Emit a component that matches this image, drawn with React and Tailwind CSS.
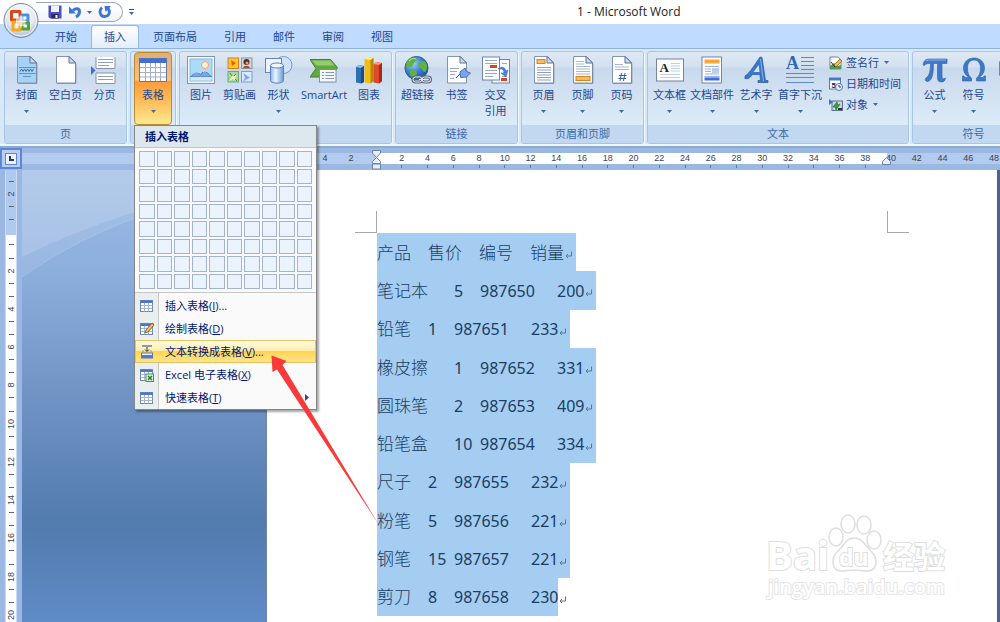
import { clsx } from "clsx";

const TABS = ["开始", "插入", "页面布局", "引用", "邮件", "审阅", "视图"];

const DOC_ROWS = [
  ["产品", "售价", "编号", "销量"],
  ["笔记本", "5", "987650", "200"],
  ["铅笔", "1", "987651", "233"],
  ["橡皮擦", "1", "987652", "331"],
  ["圆珠笔", "2", "987653", "409"],
  ["铅笔盒", "10", "987654", "334"],
  ["尺子", "2", "987655", "232"],
  ["粉笔", "5", "987656", "221"],
  ["钢笔", "15", "987657", "221"],
  ["剪刀", "8", "987658", "230"],
];

function Caret({ className }) {
  return (
    <svg viewBox="0 0 5 3" className={clsx("h-[3px] w-[5px] shrink-0", className)}>
      <path d="M0 0h5L2.5 3z" fill="#3f69a8" />
    </svg>
  );
}

function Icon({ children }) {
  return (
    <svg viewBox="0 0 28 28" className="h-7 w-7 shrink-0" fill="none">
      {children}
    </svg>
  );
}

/* Sheet of paper with a folded corner, shared by several icons */
function Sheet({ fill = "#fdfeff" }) {
  return (
    <>
      <path d="M4.500 .5h13l6 6v20.500h-19z" fill={fill} stroke="#8593ab" />
      <path d="M17 .5v6.500h6.500z" fill="#cfdcee" stroke="#5f7090" />
      <path d="M5 27.500h19v-20" stroke="#5f7090" strokeOpacity=".5" />
    </>
  );
}

const CoverIcon = () => (
  <Icon>
    <Sheet fill="#a4d3f7" />
    <path d="M6 11.500h16.500M6 17.500h16.500" stroke="#5f93bd" />
    <path d="M7 15.500l1.500-2.500 1.500 2.500 1.500-2.500 1.500 2.500 1.500-2.500 1.500 2.500 1.500-2.500 1.500 2.500 1.500-2.500" stroke="#3f6f9c" />
    <path d="M10 20.500h8" stroke="#5f93bd" />
  </Icon>
);

const BlankIcon = () => (
  <Icon>
    <Sheet />
  </Icon>
);

const BreakIcon = () => (
  <Icon>
    <path d="M5 1h19v11h-19zM5 17h19v10h-19z" fill="#fff" />
    <path d="M5 1v11.500h19v-11.500M5 27.500v-10.500h19v10.500z" stroke="#8593ab" />
    <path d="M7 3.500h15M7 6.500h15M7 9.500h11M7 20.500h15M7 23.500h15" stroke="#8ea0bd" />
    <path d="M0 10l4.500 4.500-4.500 4.500z" fill="#3f6fcf" />
  </Icon>
);

const TableIcon = () => (
  <Icon>
    <rect x=".5" y="2.500" width="27" height="23" fill="#fff" stroke="#65779a" />
    <rect x=".5" y="2.500" width="27" height="4.500" fill="#3f6fd8" />
    <path d="M1 11.500h26M1 16.500h26M1 21h26M6.500 7v18M11.500 7v18M16.500 7v18M21.500 7v18" stroke="#a3afc4" />
  </Icon>
);

const PictureIcon = () => (
  <Icon>
    <rect x=".5" y=".5" width="27" height="27" fill="#f7f9fc" stroke="#8794aa" />
    <rect x="3" y="3" width="22" height="22" fill="#a9dcf8" stroke="#8ab4da" />
    <circle cx="18" cy="9" r="3.500" fill="#fff0d5" stroke="#f3a15e" />
    <path d="M3.500 21l6-6 4 4 4-5 7 7z" fill="#7fa6df" stroke="#4776bd" />
    <path d="M3.500 21h21v3.500h-21z" fill="#cdeafb" />
    <path d="M7 17.500l2.500-2.500 2 2M16 16l1.500-2 2 2" stroke="#fff" />
  </Icon>
);

const ClipIcon = () => (
  <Icon>
    <rect x="2" y="2" width="10.500" height="10.500" fill="#ffc928" stroke="#d97c20" />
    <path d="M5 4l5 3-4 3z" fill="#e85d15" />
    <rect x="15.500" y="2" width="10.500" height="10.500" fill="#d9d3d0" stroke="#8993a3" />
    <circle cx="20.500" cy="6" r="3" fill="#4a332d" />
    <circle cx="21" cy="7" r="1.500" fill="#e0a67c" />
    <path d="M17 12c1-3 6-3 7 0z" fill="#b5472d" />
    <rect x="2" y="15.500" width="10.500" height="10.500" fill="#a9d9a3" stroke="#6aa87a" />
    <path d="M4 17l3 4 4-3-2 4 2 3-4-2-4 2 3-4z" fill="#fff6b0" />
    <path d="M4 17l2 3M11 25l-2-2M10 18l-2 2" stroke="#348b52" />
    <rect x="15.500" y="15.500" width="10.500" height="10.500" fill="#d9e8fb" stroke="#7f9ccb" />
    <path d="M17 17l7 4.500-7 4 2-4z" fill="#86a5ea" />
  </Icon>
);

const ShapesIcon = () => (
  <Icon>
    <circle cx="18.500" cy="9" r="8.500" fill="#cfe2f6" stroke="#7c98c1" />
    <rect x=".5" y="2.500" width="16" height="14" fill="#eaf3fc" stroke="#6c83a8" />
    <path d="M5.500 9.500v15c0 3.500 13 3.500 13 0v-15z" fill="url(#cyl)" stroke="#5d82bd" />
    <ellipse cx="12" cy="9.500" rx="6.500" ry="2.500" fill="#eef6ff" stroke="#5d82bd" />
    <defs>
      <linearGradient id="cyl">
        <stop stopColor="#8cb6ec" />
        <stop offset=".4" stopColor="#edf6ff" />
        <stop offset="1" stopColor="#6795d6" />
      </linearGradient>
    </defs>
  </Icon>
);

const SmartArtIcon = () => (
  <Icon>
    <path d="M0 3.500h20.500l7 8-6 9.500h-21.500l6-8.500z" fill="#63a83f" stroke="#417f2d" />
    <path d="M2 4.500h18l4.500 5h-18z" fill="#93cc70" />
    <rect x="9.500" y="13.500" width="16.500" height="12.500" fill="#f5f8fb" stroke="#7d8ea8" />
    <path d="M12 16.500h2M12 19.500h2M12 22.500h2M15.500 16.500h8.500M15.500 19.500h8.500M15.500 22.500h8.500" stroke="#8797b0" />
  </Icon>
);

const ChartIcon = () => (
  <Icon>
    <path d="M1 11l3-2 5 1v16l-3 1.500-5-1z" fill="#2c6fb5" />
    <path d="M1 11l3-2 5 1-3 2z" fill="#8bc0ec" />
    <path d="M6 12l3-2v16l-3 1.500z" fill="#1c4d86" />
    <path d="M9.500 3l3-2 6 1v23l-3 2.500-6-1z" fill="#f0bd17" />
    <path d="M9.500 3l3-2 6 1-3 2z" fill="#fff087" />
    <path d="M15.500 4l3-2v23l-3 2.500z" fill="#b9830c" />
    <path d="M18.500 8l3-2 5.500 1v18l-3 2.500-5.500-1z" fill="#e04a28" />
    <path d="M18.500 8l3-2 5.500 1-3 2z" fill="#ff9d80" />
    <path d="M24 9l3-2v18l-3 2.500z" fill="#a42c14" />
  </Icon>
);

const LinkIcon = () => (
  <Icon>
    <circle cx="12.500" cy="12" r="11.500" fill="url(#globe)" stroke="#27569c" />
    <path d="M3 5c3-4 8-4 10-3 1 2-2 3-3 5s-1 4-4 4-5 2-4-2zM15 7c3-3 6-2 7 0 2 3 1 8-1 9-3 0-2-4-5-4-2-1-3-3-1-5zM7 14c3-1 6 1 6 3s-3 4-3 5c-4-1-6-5-3-8z" fill="#63b043" />
    <path d="M5 5c3-3 6-3 7-2" stroke="#bce698" />
    <g stroke="#5e6c7d" strokeWidth="3">
      <rect x="9" y="21" width="9" height="5" rx="2.500" />
      <rect x="18" y="21" width="8.500" height="5" rx="2.500" />
    </g>
    <g stroke="#e3e9ef">
      <rect x="9" y="21" width="9" height="5" rx="2.500" />
      <rect x="18" y="21" width="8.500" height="5" rx="2.500" />
      <path d="M15 23.500h6" />
    </g>
    <defs>
      <radialGradient id="globe" cx=".35" cy=".3" r=".8">
        <stop stopColor="#9fd3fa" />
        <stop offset=".5" stopColor="#3a80d9" />
        <stop offset="1" stopColor="#1d4897" />
      </radialGradient>
    </defs>
  </Icon>
);

const BookmarkIcon = () => (
  <Icon>
    <path d="M4.500 .5h13l6 6v20.500h-19z" fill="#fdfeff" stroke="#8593ab" />
    <path d="M17 .5v6.500h6.500z" fill="#cfdcee" stroke="#5f7090" />
    <path d="M7 12.500h9M7 15.500h7M7 18.500h5M7 22.500h4" stroke="#9aa9c2" />
    <path d="M13 22l5-5" stroke="#2e4f93" />
    <path d="M17 16l5-4 1.500 3.500 4 1.500-4 4-6 .5z" fill="#7ba5e9" stroke="#4571c2" />
  </Icon>
);

const CrossRefIcon = () => (
  <Icon>
    <rect x="10" y="3.500" width="17.500" height="23.500" fill="#f8fafd" stroke="#75849e" />
    <rect x="0.500" y="1" width="17" height="23" fill="#fdfeff" stroke="#75849e" />
    <path d="M3 4.500h12M3 7.500h12M3 14.500h12M3 17.500h12M3 20.500h8M20 7.500h5M20 20.500h5" stroke="#9aa9c2" />
    <path d="M8 9h7v3h-7zM19 22h6v3h-6z" fill="#e2431e" />
    <path d="M16 13c4-1 6 1 6 4h-3l5 4 2-7-2 1c-1-4-4-5-8-2z" fill="#4f80da" stroke="#335da9" strokeWidth=".5" />
  </Icon>
);

const HeaderIcon = () => (
  <Icon>
    <Sheet />
    <rect x="7" y="3.500" width="8" height="4" fill="#f9bc62" stroke="#d9821e" />
    <path d="M7 11.500h14M7 14h14M7 16.500h14M7 19h14M7 21.500h14M7 24h14" stroke="#8fa1c2" />
  </Icon>
);

const FooterIcon = () => (
  <Icon>
    <Sheet />
    <path d="M7 5.500h8M7 8h8M7 10.500h14M7 13h14M7 15.500h14M7 18h14" stroke="#a9b8d2" />
    <rect x="7" y="20.500" width="14" height="4" fill="#f9bc62" stroke="#d9821e" />
  </Icon>
);

const PageNoIcon = () => (
  <Icon>
    <Sheet />
    <path d="M7 8.500h8M7 11h14M7 13.500h14" stroke="#a9b8d2" />
    <path d="M13.500 17l-1.500 8M17 17l-1.500 8M11 19.500h7.500M10.500 22.500h7.500" stroke="#3c5f9e" />
  </Icon>
);

const TextBoxIcon = () => (
  <Icon>
    <rect x="0.500" y="3" width="27" height="22" fill="#fafcff" stroke="#76849c" />
    <text x="3.500" y="16" fontSize="13" fontWeight="bold" fill="#222" fontFamily="Liberation Serif">A</text>
    <path d="M15 7.500h9M15 10h9M15 12.500h9M15 15h9M4 18.500h20M4 21.500h20" stroke="#c3cddd" />
  </Icon>
);

const PartsIcon = () => (
  <Icon>
    <rect x="4" y="1" width="19.500" height="26" fill="#fdfeff" stroke="#76849c" />
    <path d="M6.500 3.500h15v4h-15z" fill="#f9a63a" />
    <path d="M7 10.500h14M7 13h6M15 13h6M7 15.500h6M7 18h14" stroke="#9db0d4" />
    <path d="M14 12h7v5h-7z" fill="#b9cbee" />
    <path d="M6.500 20h15v2h-15z" fill="#8eb0ea" />
    <path d="M6.500 22h15v2.500h-15z" fill="#3f6fcb" />
  </Icon>
);

const WordArtIcon = () => (
  <Icon>
    <path d="M3 20c5-3 10-12 15-19l2 .5 3.500 23h2.500v2h-10v-2h2.500l-.6-6h-7.500c-2 3-4 5-7.500 4z" fill="#3c76c6" stroke="#275a9f" strokeWidth=".7" />
    <path d="M11.500 16h6l-.8-7z" fill="#d3e2f4" />
    <path d="M18.500 3l3 22" stroke="#84b2ec" />
  </Icon>
);

const DropCapIcon = () => (
  <Icon>
    <text x="0" y="13" fontSize="18" fontWeight="bold" fill="#2f67b2" fontFamily="Liberation Serif">A</text>
    <path d="M15 1.500h13M15 5.500h13M15 9.500h13M15 13.500h13M0 17.500h28M0 21.500h28M0 26.500h28" stroke="#5d88cb" />
  </Icon>
);

const PiIcon = () => (
  <Icon>
    <path d="M2 9c1-5 3-6 7-6h17v4.500h-5v13c0 3 2 2.500 3.500 1.500-.5 3-2 4-4 4-3 0-4-1.500-4-4.500v-14h-4c0 9-1 17.500-6 18-2.500 0-3-2.500-1-4 3-2 4-7 4-14-3 0-4.500 0-6 2z" fill="#3e79c7" stroke="#2b5fa8" strokeWidth=".6" />
    <path d="M5 5c1-1 3-1 5-1h15" stroke="#8db8ee" />
  </Icon>
);

const OmegaIcon = () => (
  <Icon>
    <path d="M2.500 25v-5h1.500l.8 1.500h4c-4-3-5.300-6-5.300-9.500 0-6 4.500-10 10.500-10s10.500 4 10.500 10c0 3.500-1.300 6.500-5.300 9.500h4l.8-1.500h1.500v5h-9v-3c3-2 4-5.500 4-10 0-5-2.500-8-6.500-8s-6.500 3-6.500 8c0 4.500 1 8 4 10v3z" fill="#3e79c7" stroke="#2b5fa8" strokeWidth=".6" />
  </Icon>
);

const NumberIcon = () => (
  <Icon>
    <rect x="0.500" y="5" width="27" height="15" rx="1" fill="#fafcff" stroke="#76849c" />
  </Icon>
);

function RibbonButton({ label, name, icon: Glyph, caret, className, active }) {
  return (
    <button
      type="button"
      aria-label={name}
      className={clsx(
        "flex shrink-0 flex-col items-center rounded-sm pt-[3px] text-[11px] leading-4",
        className || "w-[39px]",
        active
          ? "border border-[#c28a30] bg-[linear-gradient(#dcae78,#fbc278_38%,#fb9c3c_40%,#fdb956_65%,#ffe98f)] text-[#2a4a86]"
          : "border border-transparent"
      )}
    >
      <Glyph />
      <span className="mt-[3px] whitespace-pre">{label}</span>
      {caret && <Caret className="mt-[7px]" />}
    </button>
  );
}

function Group({ title, children, className }) {
  return (
    <section
      className={clsx(
        "flex h-[93px] shrink-0 flex-col rounded-[3px] border border-[#a9c5e6] shadow-[1px_1px_0_#eef6fe]",
        "bg-[linear-gradient(#dfe9f5,#d2e0f0_16%,#c9d9ed_18%,#dcebf8_80%)]",
        className
      )}
    >
      <div className="flex flex-1 px-[2px]">{children}</div>
      <h2 className="h-[18px] rounded-b-[2px] bg-[#c1d8f0] text-center text-[11px] leading-[17px] text-[#3e6aaa]">
        {title}
      </h2>
    </section>
  );
}

function SmallButton({ label, caret, children }) {
  return (
    <button type="button" className="flex h-[21px] items-center gap-[3px] whitespace-nowrap text-[11px] leading-4">
      <svg viewBox="0 0 14 14" className="h-[14px] w-[14px]" fill="none">
        {children}
      </svg>
      {label}
      {caret && <Caret className="ml-[2px]" />}
    </button>
  );
}

function Orb() {
  return (
    <button type="button" aria-label="Office" className="absolute top-[2px] left-[2px] z-10">
      <svg viewBox="0 0 38 38" className="h-[38px] w-[38px]" fill="none">
        <defs>
          <radialGradient id="orb" cx=".5" cy=".35" r=".65">
            <stop stopColor="#fff" />
            <stop offset=".6" stopColor="#e6ebf2" />
            <stop offset="1" stopColor="#a9b8cc" />
          </radialGradient>
        </defs>
        <circle cx="19" cy="18.500" r="17" fill="url(#orb)" stroke="#7d8da5" />
        <circle cx="19" cy="18.500" r="15.500" stroke="#fff" strokeOpacity=".8" />
        <g strokeWidth="3" strokeLinejoin="round">
          <rect x="9.500" y="9.500" width="8.500" height="8.500" stroke="#d9471a" />
          <rect x="20" y="13" width="6" height="6" stroke="#4a90dc" />
          <rect x="20" y="21" width="6.500" height="6" stroke="#55a233" />
          <rect x="11" y="20" width="7" height="8" stroke="#f5a91a" />
        </g>
        <path d="M14 14.500h9.500v9.500h-9.500z" fill="#f5f6f8" fillOpacity=".6" />
        <path d="M19 13.500v12M14 19.500h10.500" stroke="#fff" />
      </svg>
    </button>
  );
}

function TitleBar() {
  return (
    <header className="flex h-6 items-center bg-white">
      <div className="ml-[36px] flex h-5 w-[87px] items-center rounded-r-full border border-l-0 border-[#9aa7b8] bg-gradient-to-b from-white to-[#f1f4f9] pl-[12px]">
        <button type="button" aria-label="保存">
          <svg viewBox="0 0 14 14" className="h-[14px] w-[14px]">
            <path d="M.5.5h13v13h-11.500l-1.500-1.500z" fill="#4b4fc2" />
            <path d="M3 .5h8v6.500h-8z" fill="#f0f3fb" />
            <path d="M3.500 9h7v4.500h-7z" fill="#2a2c55" />
            <path d="M7.500 10h2v3h-2z" fill="#fff" />
          </svg>
        </button>
        <button type="button" aria-label="撤消" className="ml-[6px] flex items-center gap-[5px]">
          <svg viewBox="0 0 14 14" className="h-[14px] w-[14px]" fill="none">
            <path d="M5 5.500c3-3 6.500-2 6.500 1 0 2.500-1 4-3.500 5.500" stroke="#3d76d0" strokeWidth="3" />
            <path d="M1 1.500v7h7z" fill="#3d76d0" />
          </svg>
          <Caret />
        </button>
        <button type="button" aria-label="重复" className="ml-[6px]">
          <svg viewBox="0 0 14 14" className="h-[14px] w-[14px]" fill="none">
            <path d="M4 2.500c-3.500 3.500-2 9 2.500 9 5 0 6-5 3.500-8" stroke="#3d76d0" strokeWidth="2.800" />
            <path d="M6.500 1h6.500l-5.500 6z" fill="#3d76d0" />
          </svg>
        </button>
      </div>
      <button type="button" aria-label="自定义快速访问工具栏" className="ml-[6px] flex flex-col items-center gap-[2px]">
        <span className="h-px w-[5px] bg-[#2c4a7c]" />
        <Caret />
      </button>
      <h1 className="ml-[443px] text-[12px] leading-5 text-[#222]">1 - Microsoft Word</h1>
    </header>
  );
}

function Tabs() {
  return (
    <nav className="flex h-6 items-end gap-px bg-[#bfdbff] pl-[42px]">
      {TABS.map((tab) => (
        <button
          key={tab}
          type="button"
          className={clsx(
            "h-[23px] rounded-t-[3px] border border-b-0 px-[12px] text-[11px] leading-5 whitespace-nowrap",
            tab === "插入" ? "border-[#94b8e2] bg-gradient-to-b from-white to-[#e2edf9]" : "border-transparent"
          )}
        >
          {tab}
        </button>
      ))}
    </nav>
  );
}

function Ribbon() {
  return (
    <div className="flex h-[100px] gap-[3px] overflow-hidden border-t border-b-2 border-t-[#8db2e3] border-b-[#8aaad2] bg-[#d7e8f9] pt-[2px] pl-1 shadow-[inset_0_-2px_0_#e7fbff]">
      <Group title="页">
        <RibbonButton label="封面" icon={CoverIcon} caret />
        <RibbonButton label="空白页" icon={BlankIcon} />
        <RibbonButton label="分页" icon={BreakIcon} />
      </Group>
      <Group className="w-[46px]">
        <div className="flex px-px">
          <RibbonButton label="表格" icon={TableIcon} caret active className="w-[38px]" />
        </div>
      </Group>
      <Group className="w-[213px]">
        <RibbonButton label="图片" icon={PictureIcon} className="w-[38px]" />
        <RibbonButton label="剪贴画" icon={ClipIcon} className="w-[39px]" />
        <RibbonButton label="形状" icon={ShapesIcon} caret className="w-[39px]" />
        <RibbonButton label="SmartArt" icon={SmartArtIcon} className="w-[52px]" />
        <RibbonButton label="图表" icon={ChartIcon} className="w-[38px]" />
      </Group>
      <Group title="链接">
        <RibbonButton label="超链接" icon={LinkIcon} />
        <RibbonButton label="书签" icon={BookmarkIcon} />
        <RibbonButton label={"交叉\n引用"} icon={CrossRefIcon} />
      </Group>
      <Group title="页眉和页脚">
        <RibbonButton label="页眉" icon={HeaderIcon} caret />
        <RibbonButton label="页脚" icon={FooterIcon} caret />
        <RibbonButton label="页码" icon={PageNoIcon} caret />
      </Group>
      <Group title="文本" className="w-[262px]">
        <RibbonButton label="文本框" icon={TextBoxIcon} caret className="w-[39px]" />
        <RibbonButton label="文档部件" icon={PartsIcon} caret className="w-[46px]" />
        <RibbonButton label="艺术字" icon={WordArtIcon} caret className="w-[42px]" />
        <RibbonButton label="首字下沉" icon={DropCapIcon} caret className="w-[46px]" />
        <div className="ml-[6px] flex flex-col">
          <SmallButton label="签名行" caret>
            <path d="M1 1h8l3 3v9h-11z" fill="#fff" stroke="#76849c" />
            <path d="M1 10l4-3 3 3 4-1v4h-11z" fill="#4f9a4c" />
            <path d="M5 9l6-6 2 2-6 6z" fill="#f2bb3f" stroke="#7b5a20" strokeWidth=".7" />
            <path d="M2 6l4 5" stroke="#333" />
          </SmallButton>
          <SmallButton label="日期和时间">
            <rect x=".5" y="1" width="11" height="11" fill="#fff" stroke="#5b78b0" />
            <path d="M.5 1h11v2.500h-11z" fill="#4678d2" />
            <text x="2.500" y="11" fontSize="8" fontWeight="bold" fill="#223" fontFamily="Liberation Sans">5</text>
            <circle cx="10" cy="10" r="3.500" fill="#e5f0fc" stroke="#5b78b0" />
            <path d="M10 8v2h2" stroke="#345" />
          </SmallButton>
          <SmallButton label="对象" caret>
            <rect x="3" y="3" width="10.500" height="9.500" fill="#c6d5e8" stroke="#5b6f90" />
            <path d="M0 1l4 3-4 3z" fill="#3f6fcf" />
            <path d="M4 9l4-5 1 3 2-1-4 6-1-3z" fill="#35a035" stroke="#1d6d24" strokeWidth=".6" />
            <path d="M9 10h4v2h-4z" fill="#333" />
          </SmallButton>
        </div>
      </Group>
      <Group title="符号">
        <RibbonButton label="公式" icon={PiIcon} caret />
        <RibbonButton label="符号" icon={OmegaIcon} caret />
        <RibbonButton name="编号" icon={NumberIcon} />
      </Group>
    </div>
  );
}

function HRuler() {
  const marks = Array.from({ length: 24 }, (_, i) => (i + 1) * 2);
  return (
    <div className="flex h-[22px] overflow-hidden bg-[#9ab8e1] font-['Liberation_Sans',sans-serif] text-[9px] leading-[11px] text-[#3c4350]">
      <div className="flex h-[21px] w-[22px] shrink-0 items-center justify-center border-2 border-[#5f86d6] bg-[#b9cff0]">
        <span className="flex h-3 w-3 items-center justify-center border border-[#5f86d6] bg-[#eaf2fd]">
          <span className="h-[5px] w-[5px] border-b-2 border-l-2 border-[#26395e]" />
        </span>
      </div>
      <div className="mt-[5px] flex h-[11px] w-[354px] shrink-0 justify-end bg-[#b3cbef] pr-[12px]">
        <span className="w-[26px] text-center">4</span>
        <span className="w-[26px] text-center">2</span>
      </div>
      <div className="relative -mr-[7px] flex-1">
        <div className="mt-[5px] flex h-[11px] bg-[linear-gradient(to_right,#fff_511px,#b3cbef_511px)] pl-[13px]">
          {marks.map((n) => (
            <span key={n} className="min-w-0 flex-1 text-center">
              {n}
            </span>
          ))}
        </div>
        <div className="flex pl-[13px]">
          {marks.map((n) => (
            <span key={n} className="flex flex-1 justify-center">
              {n < 40 && <span className="mt-px h-[3px] w-px bg-[#6c7889]" />}
            </span>
          ))}
        </div>
        <svg viewBox="0 0 9 20" className="absolute top-[2px] -left-[4px] h-5 w-[9px]" fill="#e8eef6" stroke="#6b84ad">
          <path d="M.5.5h8v2.500l-4 4.500-4-4.500zM4.500 7.500l4 4v2h-8v-2zM.5 14h8v5h-8z" />
        </svg>
        <svg viewBox="0 0 9 8" className="absolute top-[9px] left-[506px] h-2 w-[9px]" fill="#e8eef6" stroke="#6b84ad">
          <path d="M4.500.5l4 4v3h-8v-3z" />
        </svg>
      </div>
    </div>
  );
}

function VRuler() {
  const marks = [2, "", 2, 4, 6, 8, 10, 12, 14, 16, 18, 20];
  return (
    <div className="h-full w-[22px] shrink-0 overflow-hidden bg-[#9ab8e1] pl-[5px]">
      <div className="w-3 border-x border-[#c9dbf5] bg-[linear-gradient(#b0c9ee_65px,#fff_65px)] pt-[5px] font-['Liberation_Sans',sans-serif] text-[9px] leading-3 text-[#3c4350]">
        <div className="flex h-[459px] flex-col">
          {marks.map((n, i) => (
            <div key={i} className="flex flex-1 flex-col items-center justify-evenly">
              <span className="h-px w-[5px] bg-[#5c6676]" />
              <span className="flex h-3 w-3 -rotate-90 items-center justify-center">{n}</span>
              <span className="h-px w-[5px] bg-[#5c6676]" />
            </div>
          ))}
        </div>
      </div>
    </div>
  );
}

const MINI_TABLE = (
  <>
    <rect x=".5" y="1.500" width="12" height="11" fill="#fff" stroke="#6f86b5" />
    <path d="M.5 1.500h12v2.500h-12z" fill="#4a78cf" />
    <path d="M1 6.500h11.500M1 9.500h11.500M4.500 4v8.500M8.500 4v8.500" stroke="#a4b4d3" />
  </>
);

const MENU_ITEMS = [
  { text: "插入表格", hotkey: "I", dots: true, icon: MINI_TABLE },
  {
    text: "绘制表格",
    hotkey: "D",
    icon: (
      <>
        {MINI_TABLE}
        <path d="M5 11l1-3 6-7 2 2-6 7z" fill="#efbf58" stroke="#5d4526" strokeWidth=".7" />
        <path d="M12 1l2 2" stroke="#d8554a" strokeWidth="1.500" />
      </>
    ),
  },
  {
    text: "文本转换成表格",
    hotkey: "V",
    dots: true,
    active: true,
    icon: (
      <>
        <path d="M2 0h10v2h-10z" fill="#8e99aa" />
        <path d="M7 2v4M5 4.500l2 2 2-2" stroke="#333" />
        <path d="M2 6h2M10 6h2" stroke="#8e99aa" />
        <rect x="1.500" y="8" width="11" height="5" fill="#e7f0fc" stroke="#5674b2" />
        <path d="M1.500 10h11v3h-11z" fill="#4c7bd3" />
      </>
    ),
  },
  {
    text: "Excel 电子表格",
    hotkey: "X",
    icon: (
      <>
        {MINI_TABLE}
        <rect x="6" y="6" width="7.500" height="7.500" fill="#e7f5e5" stroke="#3c9448" />
        <path d="M8 8l4 4M12 8l-4 4" stroke="#267a33" strokeWidth="1.500" />
      </>
    ),
  },
  { text: "快速表格", hotkey: "T", sub: true, icon: MINI_TABLE },
];

function TableMenu() {
  return (
    <div
      role="menu"
      className="absolute top-[125px] left-[134px] z-20 w-[183px] border border-[#868686] bg-[#fafafa] shadow-[2px_2px_2px_rgba(0,0,0,0.35)]"
    >
      <h3 className="h-[22px] border-b border-[#c5c5c5] bg-[#dde7ee] pl-[10px] text-[11px] leading-[22px] font-bold text-[#00156e]">
        插入表格
      </h3>
      <div className="mx-1 mt-[3px] grid h-[138px] grid-cols-10 grid-rows-8 gap-[2px]">
        {Array.from({ length: 80 }, (_, i) => (
          <span key={i} className="border border-[#a3b4d2] bg-[#ebf3ff]" />
        ))}
      </div>
      <div className="mt-[3px] border-t border-[#c5c5c5] bg-[linear-gradient(to_right,#e9eeee_23px,#c5c5c5_23px,#c5c5c5_24px,#fafafa_24px)] pt-px">
        {MENU_ITEMS.map((item) => (
          <button
            key={item.hotkey}
            type="button"
            role="menuitem"
            className={clsx(
              "flex h-[23px] w-full items-center border pr-[6px] pl-[4px] text-[11px] leading-4 text-[#00156e]",
              item.active
                ? "border-[#e6c35c] bg-[linear-gradient(#fffbe6,#ffedad_45%,#ffd44f_50%,#ffe48e)]"
                : "border-transparent"
            )}
          >
            <svg viewBox="0 0 14 14" className="h-[14px] w-[14px] shrink-0" fill="none">
              {item.icon}
            </svg>
            <span className="ml-[11px] pt-px whitespace-nowrap">
              {item.text}(<u>{item.hotkey}</u>){item.dots && "..."}
            </span>
            {item.sub && (
              <svg viewBox="0 0 4 7" className="ml-auto h-[7px] w-1">
                <path d="M0 0l4 3.500-4 3.500z" fill="#2c4a8c" />
              </svg>
            )}
          </button>
        ))}
      </div>
    </div>
  );
}

function ReturnMark() {
  return (
    <svg viewBox="0 0 12 10" className="mt-[6px] h-[10px] w-[12px] shrink-0" fill="none" stroke="#56789c">
      <path d="M7.500 1.500v4.500h-5.500M4 4l-2 2 2 2" />
    </svg>
  );
}

function DocLine({ cells, last }) {
  return (
    <p className="flex items-center">
      <span className="flex h-full items-center bg-[#a4cdf1]">
        {cells.map((cell, i) => {
          const cjk = /[^\d]/.test(cell);
          return (
            <span
              key={i}
              className={clsx(
                "pt-px",
                cjk ? "text-[17px] font-light" : "text-[16px]",
                i < 3 && (cell.length > 2 ? "w-[77px]" : cjk ? "w-[51px]" : "w-[26px]")
              )}
            >
              {cell}
            </span>
          );
        })}
        {!last && <ReturnMark />}
      </span>
      {last && <ReturnMark />}
    </p>
  );
}

function Watermark() {
  return (
    <svg
      viewBox="0 0 184 100"
      className="absolute right-[50px] bottom-[10px] h-[100px] w-[184px]"
      fill="#fff"
      stroke="#dedede"
      strokeWidth="2"
      fontFamily="Open Sans, Noto Sans CJK SC, sans-serif"
      fontWeight="bold"
    >
      <g strokeWidth="1.500">
        <ellipse cx="73" cy="25" rx="7" ry="9" />
        <ellipse cx="85" cy="12" rx="7" ry="9" />
        <ellipse cx="101" cy="13" rx="7" ry="9" />
        <ellipse cx="111" cy="28" rx="7" ry="9" />
        <path d="M91 26c-8 0-10 8-16 13-8 7-6 20 3 20 5 0 8-1 13-1s8 1 13 1c10 0 12-12 4-20-6-5-8-13-17-13z" />
      </g>
      <g paintOrder="stroke">
        <text x="3" y="58" fontSize="40">Bai</text>
        <text x="76" y="54" fontSize="23">du</text>
        <text x="120" y="56" fontSize="31">经验</text>
        <text x="5" y="82" fontSize="20" fontWeight="600" stroke="#e6e6e6">jingyan.baidu.com</text>
      </g>
    </svg>
  );
}

function Workspace() {
  return (
    <main className="flex min-h-0 flex-1">
      <VRuler />
      <div className="w-[244px] shrink-0 bg-[linear-gradient(#9dbce6,#8dafde_22%,#7093c4_50%,#527bae_78%,#5f8bc7)]">
        <svg viewBox="0 0 244 110" className="h-[110px] w-[244px]">
          <path d="M0 0h244v17c-90 12-170 38-244 90z" fill="#fff" fillOpacity=".1" />
          <path d="M0 0h244v15c-90 10-170 36-244 72z" fill="#fff" fillOpacity=".14" />
          <path d="M0 107c74-52 154-78 244-90" fill="none" stroke="#fff" strokeOpacity=".15" />
        </svg>
      </div>
      <div className="relative min-w-0 flex-1 border-l border-[#6f86ab] bg-white pt-[41px]">
        <div className="flex justify-between px-[88px]">
          <span className="h-[22px] w-[22px] border-r border-b border-[#a8a8a8]" />
          <span className="h-[22px] w-[22px] border-b border-l border-[#a8a8a8]" />
        </div>
        <article className="ml-[110px] grid h-[383px] auto-rows-fr font-['Noto_Sans','Noto_Sans_CJK_SC',sans-serif] leading-6 text-[#1b3d63]">
          {DOC_ROWS.map((cells, i) => (
            <DocLine key={cells[0]} cells={cells} last={i === DOC_ROWS.length - 1} />
          ))}
        </article>
        <Watermark />
      </div>
      <div className="w-[3px] shrink-0 bg-[#4a6490]" />
    </main>
  );
}

export default function App() {
  return (
    <div className="relative flex h-screen flex-col overflow-hidden bg-white font-['Open_Sans','Noto_Sans_CJK_SC',sans-serif] text-[#1d4690]">
      <Orb />
      <TitleBar />
      <Tabs />
      <Ribbon />
      <HRuler />
      <Workspace />
      <TableMenu />
      {/* Pointer from the document text to the active menu item */}
      <svg viewBox="0 0 110 174" className="absolute top-[354px] left-[270px] z-30 h-[174px] w-[110px]">
        <path d="M1.500 1.500l15 5.500-4 4 96.500 160-102-155.500-4.500 2.500z" fill="#f93a3a" />
      </svg>
    </div>
  );
}
